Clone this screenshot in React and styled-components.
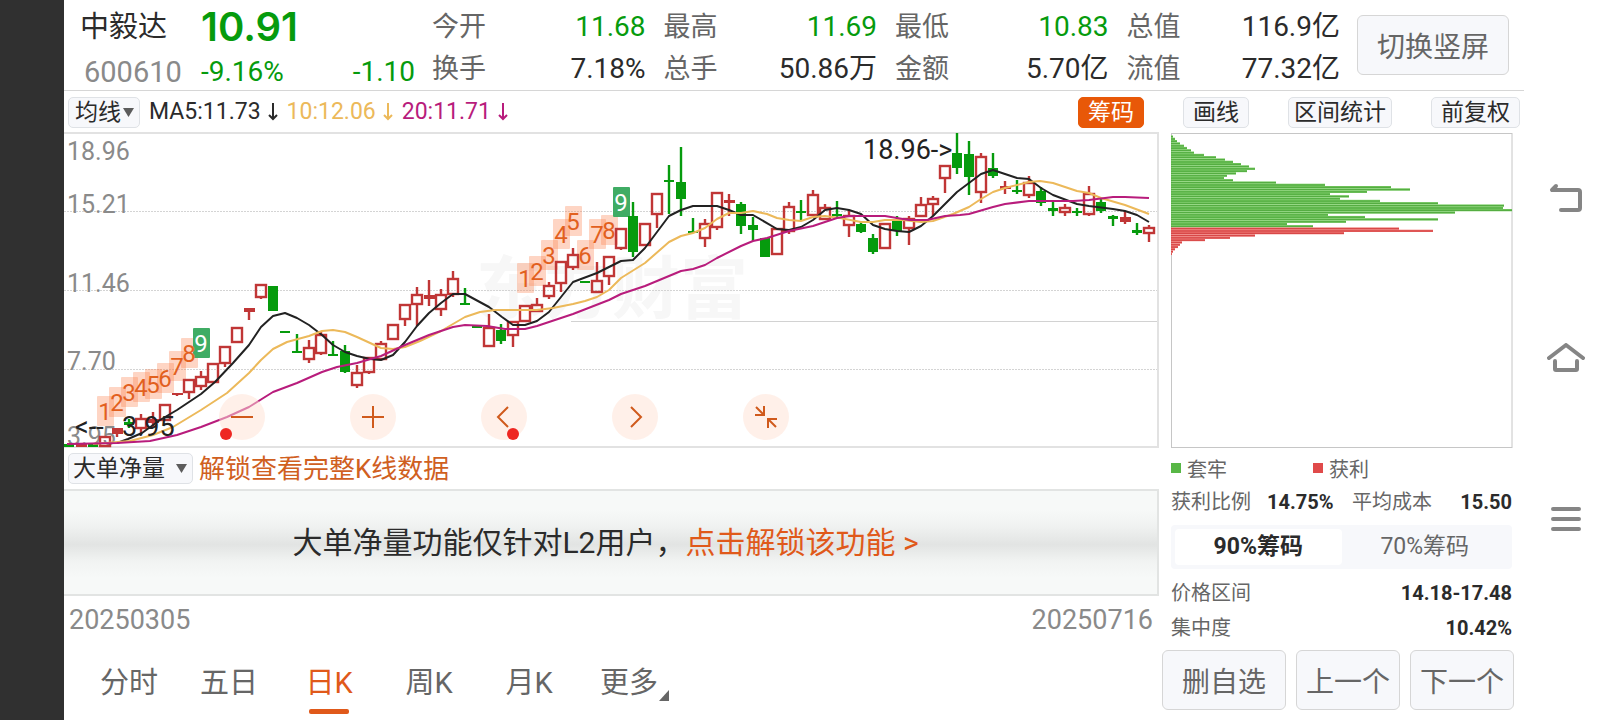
import React, { useState } from "react";
import styled, { createGlobalStyle } from "styled-components";

const GlobalStyle = createGlobalStyle`
  * { box-sizing: border-box; }
  body {
    margin: 0;
    background: #fff;
    color: #2b2b2b;
    font-family: Roboto, "Noto Sans CJK SC", sans-serif;
  }
  button, select { font-family: inherit; margin: 0; cursor: pointer; }
`;

const color = {
  text: "#2b2b2b",
  label: "#666",
  muted: "#8a8a8a",
  up: "#c03636",
  down: "#069b0d",
  accent: "#e0591a",
  yellow: "#ecb95a",
  magenta: "#b81c7c",
  line: "#d6d6d6",
  soft: "#f7f8fb",
};

/* ---------- page ---------- */

const Page = styled.div`
  display: grid;
  grid-template-columns: 64px minmax(0, 1fr) 84px;
  min-height: 100vh;
`;

const Rail = styled.div`
  background: #303030;
`;

const Main = styled.main`
  display: flex;
  flex-direction: column;
`;

const SystemNav = styled.nav`
  display: flex;
  flex-direction: column;
  align-items: center;
  padding-top: 179px;
  gap: 120px;
`;

const NavButton = styled.button`
  display: flex;
  align-items: center;
  justify-content: center;
  width: 40px;
  height: 40px;
  padding: 0;
  border: 0;
  background: none;
  color: #858585;
`;

/* ---------- header ---------- */

const Header = styled.header`
  display: flex;
  align-items: center;
  height: 91px;
  padding: 0 15px 0 16px;
  gap: 17px;
  border-bottom: 1px solid ${color.line};
`;

const Quote = styled.div`
  display: grid;
  grid-template-columns: 103px 214px;
  grid-template-rows: 54px 36px;
  column-gap: 18px;
  align-items: center;
`;

const Name = styled.h1`
  margin: 0;
  font-size: 29px;
  font-weight: 400;
  line-height: 54px;
`;

const Price = styled.div`
  font-family: Inter, sans-serif;
  font-size: 40px;
  font-weight: 600;
  line-height: 54px;
  color: ${color.down};
`;

const Code = styled.div`
  padding-left: 4px;
  font-size: 29px;
  line-height: 36px;
  color: ${color.muted};
`;

const Change = styled.div`
  display: flex;
  justify-content: space-between;
  font-size: 28px;
  line-height: 36px;
  color: ${color.down};
`;

const Stats = styled.dl`
  display: grid;
  flex: 1;
  grid-template-columns: repeat(4, 1fr);
  grid-auto-rows: 42px;
  column-gap: 18px;
  margin: 0;
  padding-top: 6px;
`;

const Stat = styled.div`
  display: flex;
  justify-content: space-between;
  align-items: baseline;
  font-size: 28px;
  line-height: 42px;
  dt { font-size: 27px; color: ${color.label}; }
  dd { margin: 0; color: ${(p) => (p.$down ? color.down : color.text)}; }
`;

const PanelButton = styled.button`
  width: ${(p) => p.$width}px;
  height: 60px;
  padding: 0;
  border: 1px solid ${color.line};
  border-radius: 6px;
  background: ${color.soft};
  font-size: 28px;
  color: ${color.label};
`;

/* ---------- tool bars ---------- */

const Toolbar = styled.div`
  display: flex;
  align-items: center;
  height: 42px;
  padding: 0 4px;
`;

const SelectBox = styled.div`
  display: grid;
  width: ${(p) => p.$width}px;
  height: 31px;
  align-items: center;
  border: 1px solid #dfe2e6;
  border-radius: 5px;
  background: ${color.soft};
  select, svg { grid-area: 1 / 1; }
  svg { justify-self: end; margin-right: 5px; pointer-events: none; }
`;

const Select = styled.select`
  appearance: none;
  width: 100%;
  height: 29px;
  padding: 0 0 0 ${(p) => p.$pad}px;
  border: 0;
  background: none;
  font-size: 23px;
  color: ${color.text};
`;

const Averages = styled.div`
  display: flex;
  flex: 1;
  gap: 9px;
  margin-left: 9px;
`;

const Average = styled.span`
  display: flex;
  align-items: center;
  gap: 7px;
  font-size: 23px;
  line-height: 32px;
  color: ${(p) => p.$color};
`;

const Tools = styled.div`
  display: flex;
  gap: 39px;
`;

const Tool = styled.button`
  height: 31px;
  padding: 0 ${(p) => (p.$tight ? 5 : 9)}px;
  border: 1px solid ${(p) => (p.$active ? "#e85808" : "#dfe2e6")};
  border-radius: 5px;
  background: ${(p) => (p.$active ? "#e85808" : color.soft)};
  font-size: 23px;
  line-height: 29px;
  color: ${(p) => (p.$active ? "#fff" : color.text)};
`;

/* ---------- columns ---------- */

const Columns = styled.div`
  display: grid;
  flex: 1;
  grid-template-columns: minmax(0, 1fr) 365px;
`;

const ChartColumn = styled.section`
  display: flex;
  flex-direction: column;
`;

const ChartArea = styled.div`
  position: relative;
  & > svg { display: block; width: 100%; height: auto; overflow: visible; }
`;

const ChartControls = styled.div`
  position: absolute;
  left: 14%;
  bottom: 7px;
  display: flex;
  gap: 85px;
  padding-left: 2px;
`;

const RoundButton = styled.button`
  position: relative;
  display: flex;
  align-items: center;
  justify-content: center;
  width: 46px;
  height: 46px;
  padding: 0;
  border: 0;
  border-radius: 50%;
  background: rgba(255, 226, 212, 0.5);
  color: #d05a1c;
`;

const Dot = styled.span`
  position: absolute;
  bottom: 0;
  left: ${(p) => (p.$side === "left" ? 1 : 26)}px;
  width: 12px;
  height: 12px;
  border-radius: 50%;
  background: #ee2722;
`;

const UnlockLink = styled.a`
  margin-left: 6px;
  padding-top: 2px;
  font-size: 26px;
  line-height: 40px;
  color: #d0601f;
  text-decoration: none;
`;

const Banner = styled.div`
  display: flex;
  align-items: center;
  justify-content: center;
  height: 107px;
  padding-right: 10px;
  border: 2px solid #e2e4e3;
  border-left: 0;
  background: linear-gradient(#f7f9f8 18%, #f0f2f1 34%, #e2e4e3 52%, #f1f3f2 68%, #f7f9f8 84%);
  font-size: 30px;
  line-height: 40px;
  a { color: ${color.accent}; text-decoration: none; }
`;

const Dates = styled.div`
  display: flex;
  justify-content: space-between;
  align-items: center;
  height: 46px;
  padding: 2px 6px 0 5px;
  font-size: 27px;
  color: ${color.muted};
`;

const Tabs = styled.div`
  display: flex;
  flex: 1;
  min-height: 78px;
  padding-left: 15px;
`;

const Tab = styled.button`
  display: flex;
  flex-direction: column;
  align-items: center;
  justify-content: flex-end;
  width: 100px;
  padding: 0 0 6px;
  border: 0;
  background: none;
  font-size: 29px;
  line-height: 40px;
  color: ${(p) => (p.$active ? color.accent : color.label)};
  &::after {
    content: "";
    width: 40px;
    height: 5px;
    margin-top: 6px;
    border-radius: 2px;
    background: ${(p) => (p.$active ? color.accent : "transparent")};
  }
`;

const TabLabel = styled.span`
  position: relative;
  svg { position: absolute; left: 100%; bottom: 2px; margin-left: 1px; }
`;

/* ---------- chip panel ---------- */

const ChipColumn = styled.aside`
  display: flex;
  flex-direction: column;
  padding: 0 10px 10px 3px;
`;

const ChipPanel = styled.div`
  flex: 1;
  padding: 0 2px 0 9px;
  font-size: 20px;
  color: ${color.label};
  & > svg { display: block; width: 100%; height: auto; overflow: visible; }
`;

const Legend = styled.div`
  display: grid;
  grid-template-columns: 142px 1fr;
  height: 42px;
  align-items: center;
`;

const LegendItem = styled.span`
  display: flex;
  align-items: center;
  gap: 6px;
  &::before {
    content: "";
    width: 10px;
    height: 10px;
    background: ${(p) => p.$color};
  }
`;

const FactRow = styled.div`
  display: grid;
  grid-template-columns: ${(p) => (p.$double ? "96px 85px 1fr auto" : "1fr auto")};
  align-items: baseline;
  line-height: ${(p) => (p.$double ? 27 : 35)}px;
  strong { font-size: 20px; color: ${color.text}; }
`;

const Segments = styled.div`
  display: grid;
  grid-template-columns: 1fr 1fr;
  height: 44px;
  margin: 9px 0 7px;
  padding: 4px;
  border-radius: 4px;
  background: ${color.soft};
`;

const Segment = styled.button`
  padding: 0;
  border: 0;
  border-radius: 4px;
  background: ${(p) => (p.$active ? "#fff" : "none")};
  font-size: 23px;
  line-height: 36px;
  font-weight: ${(p) => (p.$active ? 700 : 400)};
  color: ${(p) => (p.$active ? color.text : color.label)};
`;

const Actions = styled.div`
  display: flex;
  gap: 10px;
`;

/* ---------- data ---------- */

// One entry per trading day: [kind, wick top, body top, body bottom, wick bottom].
// r: hollow rising, s: solid rising, g: falling.
const candles = [
  ["g", 311, 311, 314, 314], ["s", 311, 311, 314, 314], ["g", 311, 311, 314, 314],
  ["r", 304, 304, 313, 313], ["s", 295, 295, 301, 304], ["g", 286, 289, 292, 295],
  ["r", 281, 286, 295, 300], ["s", 279, 286, 290, 295], ["r", 272, 272, 287, 288],
  ["s", 260, 260, 262, 263], ["r", 247, 247, 259, 266], ["r", 238, 244, 253, 257],
  ["r", 231, 231, 249, 249], ["r", 214, 214, 230, 234], ["r", 195, 195, 209, 209],
  ["s", 175, 175, 179, 187], ["r", 152, 152, 164, 166], ["g", 153, 153, 178, 178],
  ["g", 198, 198, 200, 200], ["g", 201, 218, 220, 220], ["r", 207, 215, 226, 230],
  ["r", 199, 202, 220, 222], ["g", 208, 221, 223, 223], ["g", 212, 218, 239, 240],
  ["r", 232, 240, 252, 255], ["r", 225, 225, 239, 241], ["r", 208, 211, 226, 227],
  ["r", 192, 192, 206, 206], ["r", 172, 172, 186, 193], ["r", 154, 162, 171, 193],
  ["s", 147, 162, 166, 173], ["r", 156, 162, 176, 183], ["r", 138, 146, 161, 164],
  ["g", 155, 170, 172, 172], ["g", 193, 193, 195, 195], ["r", 181, 195, 213, 213],
  ["g", 191, 197, 208, 211], ["r", 189, 189, 202, 214], ["r", 173, 173, 188, 188],
  ["r", 165, 172, 178, 178], ["r", 149, 153, 163, 166], ["r", 129, 129, 150, 159],
  ["r", 115, 122, 134, 137], ["g", 148, 148, 150, 150], ["r", 129, 148, 159, 159],
  ["r", 124, 124, 143, 152], ["r", 96, 96, 115, 117], ["g", 69, 83, 119, 124],
  ["r", 91, 91, 112, 113], ["r", 61, 61, 81, 95], ["g", 32, 47, 49, 81],
  ["g", 14, 49, 66, 83], ["g", 85, 98, 100, 100], ["r", 86, 91, 105, 114],
  ["r", 60, 60, 94, 97], ["s", 61, 67, 70, 83], ["g", 69, 71, 93, 101],
  ["g", 84, 92, 97, 108], ["g", 105, 105, 124, 124], ["r", 96, 96, 121, 121],
  ["r", 69, 74, 98, 101], ["g", 67, 78, 80, 87], ["r", 57, 62, 82, 82],
  ["r", 71, 75, 86, 86], ["g", 68, 81, 83, 84], ["r", 77, 83, 92, 104],
  ["g", 88, 91, 99, 100], ["g", 101, 105, 119, 121], ["r", 91, 91, 115, 115],
  ["g", 83, 87, 98, 103], ["r", 83, 86, 95, 112], ["r", 64, 72, 83, 83],
  ["r", 63, 66, 71, 83], ["r", 33, 33, 45, 60], ["g", 0, 20, 35, 41],
  ["g", 8, 21, 44, 62], ["r", 20, 24, 59, 70], ["g", 20, 35, 43, 45],
  ["s", 48, 53, 56, 61], ["g", 47, 57, 59, 61], ["r", 43, 50, 62, 65],
  ["g", 54, 58, 70, 73], ["g", 67, 75, 78, 83], ["r", 71, 75, 79, 83],
  ["g", 75, 78, 80, 83], ["r", 53, 61, 81, 83], ["g", 66, 69, 78, 80],
  ["g", 82, 83, 86, 93], ["s", 78, 84, 89, 91], ["g", 90, 97, 100, 102],
  ["r", 92, 95, 100, 109],
];

const ma5 =
  "53,310 64,306 78,300 96,287 113,277 137,261 151,249 169,230 185,212 197,194 209,183 221,180 233,185 245,192 258,202 269,212 281,219 293,223 306,226 317,227 329,222 341,209 353,193 365,180 377,170 389,161 401,161 425,174 438,184 449,192 461,192 473,188 485,179 497,164 509,149 533,140 557,128 569,127 581,115 593,99 605,83 617,77 629,73 653,73 665,77 677,82 689,82 713,96 725,97 737,94 749,87 761,77 773,75 785,77 797,81 809,92 821,96 833,98 845,99 857,93 869,83 881,71 893,59 905,50 917,41 929,37 941,41 953,45 965,46 977,55 989,62 1013,71 1025,73 1049,76 1061,78 1073,82 1085,89";
const ma10 =
  "29,311 66,308 89,302 109,294 137,277 163,260 185,240 197,227 209,216 223,209 245,203 258,198 269,197 281,199 293,204 317,215 329,216 341,214 356,208 377,198 401,184 416,179 431,177 473,177 489,175 509,171 521,168 533,164 545,157 557,145 581,130 605,109 617,103 629,100 641,95 653,86 665,80 677,80 689,78 703,81 713,85 725,87 737,88 749,84 761,83 776,85 797,89 809,89 821,87 839,87 857,89 869,88 889,81 905,74 917,66 929,59 941,55 965,49 976,48 989,50 1013,58 1025,60 1037,65 1061,72 1085,81";
const ma20 =
  "3,311 53,310 86,308 113,302 137,294 163,284 185,274 209,259 233,250 258,239 273,234 293,230 317,223 341,212 365,202 389,194 401,192 423,193 441,196 461,196 473,193 485,189 509,181 545,167 557,161 581,153 605,143 617,138 629,136 641,132 653,125 677,113 689,108 703,105 725,98 749,93 773,85 785,83 821,83 845,87 863,87 881,83 896,82 905,81 929,74 941,71 965,68 1009,68 1025,67 1049,64 1061,64 1085,65";

// Sequential-count marks: [day index, centre y, count].
const marks = [
  [3, 278, 1], [4, 269, 2], [5, 259, 3], [6, 254, 4], [7, 251, 5], [8, 245, 6],
  [9, 233, 7], [10, 220, 8], [11, 210, 9],
  [38, 145, 1], [39, 138, 2], [40, 122, 3], [41, 101, 4], [42, 88, 5], [43, 122, 6],
  [44, 101, 7], [45, 97, 8], [46, 69, 9],
];

const axis = [["18.96", 27], ["15.21", 80], ["11.46", 159], ["7.70", 237], ["3.95", 312]];

const trapped = [
  2, 4, 6, 9, 13, 16, 20, 23, 33, 45, 54, 62, 70, 78, 84, 76, 65, 56, 53, 62, 105, 154,
  220, 239, 196, 159, 178, 169, 209, 267, 333, 332, 341, 284, 157, 194, 267, 175, 116, 142,
];
const profit = [228, 262, 173, 84, 59, 34, 11, 9, 7, 4, 2, 1];

const stats = [
  ["今开", "11.68", true], ["最高", "11.69", true], ["最低", "10.83", true], ["总值", "116.9亿"],
  ["换手", "7.18%"], ["总手", "50.86万"], ["金额", "5.70亿"], ["流值", "77.32亿"],
];

/* ---------- drawings ---------- */

const DownTriangle = () => (
  <svg width="11" height="9" aria-hidden="true"><path d="M0 0h11L5.5 9z" fill="#5c5c5c" /></svg>
);

const DownArrow = () => (
  <svg width="10" height="18" viewBox="0 0 10 18" fill="none" stroke="currentColor" strokeWidth="2" aria-hidden="true">
    <path d="M5 0v16M1 12l4 4 4-4" />
  </svg>
);

const dayX = (i) => 5 + 12 * i;

function Candle({ day, index }) {
  const [kind, high, top, bottom, low] = day;
  const x = dayX(index);
  const tint = kind === "g" ? color.down : color.up;
  if (kind === "r") {
    return (
      <g stroke={tint} strokeWidth="2.4" fill="none">
        {high < top && <path d={`M${x} ${high}V${top}`} />}
        {low > bottom && <path d={`M${x} ${bottom}V${low}`} />}
        <rect x={x - 5} y={top} width="10" height={bottom - top} />
      </g>
    );
  }
  return (
    <g fill={tint}>
      <rect x={x - 1.2} y={high} width="2.4" height={low - high} />
      <rect x={x - 5} y={top} width={kind === "s" ? 11 : 10} height={bottom - top} />
    </g>
  );
}

function CandleChart() {
  return (
    <svg viewBox="0 0 1095 314" role="img" aria-label="日K线图" fontFamily='Roboto, "Noto Sans CJK SC", sans-serif'>
      <text x="412" y="180" fontSize="68" fontWeight="700" fill="#f7f7f7">东方财富</text>
      {[78, 157, 236].map((y) => (
        <path key={y} d={`M0 ${y}.5H1094`} stroke="#d4d4d4" strokeDasharray="2 1" />
      ))}
      <path d="M507 188.5H1094" stroke="#d2d2d2" />
      <path d="M0 0H1094V314H0" fill="none" stroke="#e2e2e2" strokeWidth="2" />
      {axis.map(([label, y]) => (
        <text key={label} x="3" y={y} fontSize="25" fill={color.muted}>{label}</text>
      ))}
      {marks.map(([i, y, n]) => (
        <rect key={i} x={dayX(i) - 8} y={y - 15} width="17" height="30" rx="1" fill={n === 9 ? "#3fac64" : "rgba(252,128,76,.33)"} />
      ))}
      {candles.map((day, i) => <Candle key={i} day={day} index={i} />)}
      <g fill="none" strokeWidth="2" strokeLinejoin="round">
        <polyline points={ma5} stroke="#222" />
        <polyline points={ma10} stroke={color.yellow} />
        <polyline points={ma20} stroke={color.magenta} />
      </g>
      {marks.map(([i, y, n]) => (
        <text key={i} x={dayX(i)} y={y + 9} fontSize="24" textAnchor="middle" fill={n === 9 ? "#fff" : "#e2601e"}>{n}</text>
      ))}
      <g fontSize="27" fill="#222">
        <text x="799" y="26">18.96-&gt;</text>
        <text x="11" y="303">&lt;--</text>
        <text x="58" y="303">3.95</text>
      </g>
    </svg>
  );
}

function ChipChart() {
  const rows = [...trapped.map((w) => [w, "#7dcf68", "#55ad42"]), ...profit.map((w) => [w, "#f07a76", "#d84848"])];
  return (
    <svg viewBox="0 0 341 314" role="img" aria-label="筹码分布">
      <path d="M0 .5H341M341 0V315M0 314.500H341M.5 0V315" fill="none" stroke="#c6c6c6" />
      {rows.map(([w, light, dark], i) => (
        <g key={i}>
          <rect x="0" y={2.4 + 2.3 * i} width={w} height="2.3" fill={light} />
          <rect x="0" y={3 + 2.3 * i} width={w} height="1.4" fill={dark} />
        </g>
      ))}
    </svg>
  );
}

const Stroke = ({ children }) => (
  <svg width="26" height="26" viewBox="0 0 26 26" fill="none" stroke="currentColor" strokeWidth="2" aria-hidden="true">
    {children}
  </svg>
);

/* ---------- app ---------- */

export default function App() {
  const [period, setPeriod] = useState("日K");
  const [range, setRange] = useState("90%筹码");

  return (
    <Page>
      <GlobalStyle />
      <Rail />
      <Main>
        <Header>
          <Quote>
            <Name>中毅达</Name>
            <Price>10.91</Price>
            <Code>600610</Code>
            <Change><span>-9.16%</span><span>-1.10</span></Change>
          </Quote>
          <Stats>
            {stats.map(([label, value, down]) => (
              <Stat key={label} $down={down}><dt>{label}</dt><dd>{value}</dd></Stat>
            ))}
          </Stats>
          <PanelButton $width={152}>切换竖屏</PanelButton>
        </Header>

        <Toolbar>
          <SelectBox $width={72}>
            <Select $pad={6} aria-label="指标"><option>均线</option></Select>
            <DownTriangle />
          </SelectBox>
          <Averages>
            <Average $color={color.text}>MA5:11.73<DownArrow /></Average>
            <Average $color={color.yellow}>10:12.06<DownArrow /></Average>
            <Average $color={color.magenta}>20:11.71<DownArrow /></Average>
          </Averages>
          <Tools>
            <Tool $active>筹码</Tool>
            <Tool>画线</Tool>
            <Tool $tight>区间统计</Tool>
            <Tool>前复权</Tool>
          </Tools>
        </Toolbar>

        <Columns>
          <ChartColumn>
            <ChartArea>
              <CandleChart />
              <ChartControls>
                <RoundButton aria-label="缩小"><Stroke><path d="M2 13h22" /></Stroke><Dot $side="left" /></RoundButton>
                <RoundButton aria-label="放大"><Stroke><path d="M2 13h22M13 2v22" /></Stroke></RoundButton>
                <RoundButton aria-label="向左"><Stroke><path d="M17 3L7 13l10 10" /></Stroke><Dot $side="right" /></RoundButton>
                <RoundButton aria-label="向右"><Stroke><path d="M9 3l10 10L9 23" /></Stroke></RoundButton>
                <RoundButton aria-label="收起">
                  <Stroke><path d="M3 3l8 8M2 11h10M11 2v9M23 23l-8-8M14 15h10M15 14v10" /></Stroke>
                </RoundButton>
              </ChartControls>
            </ChartArea>
            <Toolbar>
              <SelectBox $width={125}>
                <Select $pad={4} aria-label="副图指标"><option>大单净量</option></Select>
                <DownTriangle />
              </SelectBox>
              <UnlockLink href="#unlock">解锁查看完整K线数据</UnlockLink>
            </Toolbar>
            <Banner>
              <span>大单净量功能仅针对L2用户，</span>
              <a href="#level2">点击解锁该功能 &gt;</a>
            </Banner>
            <Dates><span>20250305</span><span>20250716</span></Dates>
            <Tabs>
              {["分时", "五日", "日K", "周K", "月K", "更多"].map((name) => (
                <Tab key={name} $active={name === period} onClick={() => setPeriod(name)}>
                  <TabLabel>
                    {name}
                    {name === "更多" && (
                      <svg width="10" height="11" aria-hidden="true"><path d="M10 0v11H0z" fill="#666" /></svg>
                    )}
                  </TabLabel>
                </Tab>
              ))}
            </Tabs>
          </ChartColumn>

          <ChipColumn>
            <ChipPanel>
              <ChipChart />
              <Legend>
                <LegendItem $color="#58b746">套牢</LegendItem>
                <LegendItem $color="#e04a4a">获利</LegendItem>
              </Legend>
              <FactRow $double>
                <span>获利比例</span><strong>14.75%</strong><span>平均成本</span><strong>15.50</strong>
              </FactRow>
              <Segments>
                {["90%筹码", "70%筹码"].map((name) => (
                  <Segment key={name} $active={name === range} onClick={() => setRange(name)}>{name}</Segment>
                ))}
              </Segments>
              <FactRow><span>价格区间</span><strong>14.18-17.48</strong></FactRow>
              <FactRow><span>集中度</span><strong>10.42%</strong></FactRow>
            </ChipPanel>
            <Actions>
              <PanelButton $width={124}>删自选</PanelButton>
              <PanelButton $width={104}>上一个</PanelButton>
              <PanelButton $width={104}>下一个</PanelButton>
            </Actions>
          </ChipColumn>
        </Columns>
      </Main>

      <SystemNav aria-label="系统导航">
        <NavButton aria-label="返回">
          <svg width="34" height="32" viewBox="0 0 34 32" fill="none" stroke="currentColor" strokeWidth="4" strokeLinejoin="round" strokeLinecap="round">
            <path d="M7 3L3 7h26q2 0 2 2v16q0 2-2 2H12" />
          </svg>
        </NavButton>
        <NavButton aria-label="主屏幕">
          <svg width="38" height="32" viewBox="0 0 38 32" fill="none" stroke="currentColor" strokeWidth="4" strokeLinejoin="round" strokeLinecap="round">
            <path d="M2 15L19 2l17 13M8 18v8q0 1 1 1h20q1 0 1-1v-8" />
          </svg>
        </NavButton>
        <NavButton aria-label="最近任务">
          <svg width="30" height="26" viewBox="0 0 30 26" fill="none" stroke="currentColor" strokeWidth="4" strokeLinecap="round">
            <path d="M2 3h26M2 13h26M2 23h26" />
          </svg>
        </NavButton>
      </SystemNav>
    </Page>
  );
}
